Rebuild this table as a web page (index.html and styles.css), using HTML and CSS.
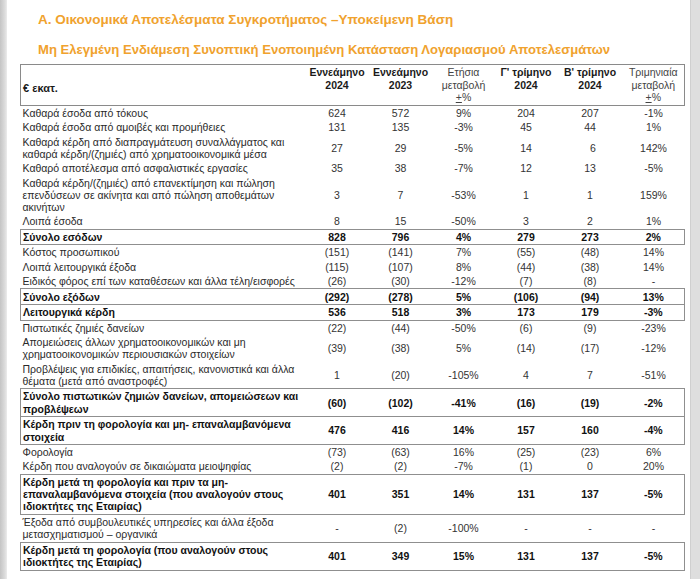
FILE: index.html
```html
<!DOCTYPE html>
<html lang="el">
<head>
<meta charset="utf-8">
<link rel="stylesheet" href="styles.css">
</head>
<body>
<div class="frame">
  <div class="edge-left"></div>
  <div class="page">
    <h1 class="title">Α. Οικονομικά Αποτελέσματα Συγκροτήματος –Υποκείμενη Βάση</h1>
    <h2 class="subtitle">Μη Ελεγμένη Ενδιάμεση Συνοπτική Ενοποιημένη Κατάσταση Λογαριασμού Αποτελεσμάτων</h2>
    <table class="fin">
      <colgroup>
        <col class="c-label"><col class="c-a"><col class="c-b"><col class="c-c"><col class="c-d"><col class="c-e"><col class="c-f">
      </colgroup>
      <thead>
        <tr class="head">
          <th class="lbl">€ εκατ.</th>
          <th>Εννεάμηνο<br>2024</th>
          <th>Εννεάμηνο<br>2023</th>
          <th class="reg">Ετήσια<br>μεταβολή<br><u>+</u>%</th>
          <th>Γ' τρίμηνο<br>2024</th>
          <th>Β' τρίμηνο<br>2024</th>
          <th class="reg">Τριμηνιαία<br>μεταβολή<br><u>+</u>%</th>
        </tr>
      </thead>
      <tbody>
        <tr><td>Καθαρά έσοδα από τόκους</td><td>624</td><td>572</td><td>9%</td><td>204</td><td>207</td><td>-1%</td></tr>
        <tr><td>Καθαρά έσοδα από αμοιβές και προμήθειες</td><td>131</td><td>135</td><td>-3%</td><td>45</td><td>44</td><td>1%</td></tr>
        <tr><td>Καθαρά κέρδη από διαπραγμάτευση συναλλάγματος και<br>καθαρά κέρδη/(ζημιές) από χρηματοοικονομικά μέσα</td><td>27</td><td>29</td><td>-5%</td><td>14</td><td>&nbsp;&nbsp;6</td><td>142%</td></tr>
        <tr><td>Καθαρό αποτέλεσμα από ασφαλιστικές εργασίες</td><td>35</td><td>38</td><td>-7%</td><td>12</td><td>13</td><td>-5%</td></tr>
        <tr><td>Καθαρά κέρδη/(ζημιές) από επανεκτίμηση και πώληση<br>επενδύσεων σε ακίνητα και από πώληση αποθεμάτων<br>ακινήτων</td><td>3</td><td>7</td><td>-53%</td><td>1</td><td>1</td><td>159%</td></tr>
        <tr><td>Λοιπά έσοδα</td><td>8</td><td>15</td><td>-50%</td><td>3</td><td>2</td><td>1%</td></tr>
        <tr class="box"><td>Σύνολο εσόδων</td><td>828</td><td>796</td><td>4%</td><td>279</td><td>273</td><td>2%</td></tr>
        <tr><td>Κόστος προσωπικού</td><td>(151)</td><td>(141)</td><td>7%</td><td>(55)</td><td>(48)</td><td>14%</td></tr>
        <tr><td>Λοιπά λειτουργικά έξοδα</td><td>(115)</td><td>(107)</td><td>8%</td><td>(44)</td><td>(38)</td><td>14%</td></tr>
        <tr><td>Ειδικός φόρος επί των καταθέσεων και άλλα τέλη/εισφορές</td><td>(26)</td><td>(30)</td><td>-12%</td><td>(7)</td><td>(8)</td><td>-</td></tr>
        <tr class="box"><td>Σύνολο εξόδων</td><td>(292)</td><td>(278)</td><td>5%</td><td>(106)</td><td>(94)</td><td>13%</td></tr>
        <tr class="box"><td>Λειτουργικά κέρδη</td><td>536</td><td>518</td><td>3%</td><td>173</td><td>179</td><td>-3%</td></tr>
        <tr><td>Πιστωτικές ζημιές δανείων</td><td>(22)</td><td>(44)</td><td>-50%</td><td>(6)</td><td>(9)</td><td>-23%</td></tr>
        <tr><td>Απομειώσεις άλλων χρηματοοικονομικών και μη<br>χρηματοοικονομικών περιουσιακών στοιχείων</td><td>(39)</td><td>(38)</td><td>5%</td><td>(14)</td><td>(17)</td><td>-12%</td></tr>
        <tr><td>Προβλέψεις για επιδικίες, απαιτήσεις, κανονιστικά και άλλα<br>θέματα (μετά από αναστροφές)</td><td>1</td><td>(20)</td><td>-105%</td><td>4</td><td>7</td><td>-51%</td></tr>
        <tr class="box"><td>Σύνολο πιστωτικών ζημιών δανείων, απομειώσεων και<br>προβλέψεων</td><td>(60)</td><td>(102)</td><td>-41%</td><td>(16)</td><td>(19)</td><td>-2%</td></tr>
        <tr class="box"><td>Κέρδη πριν τη φορολογία και μη- επαναλαμβανόμενα<br>στοιχεία</td><td>476</td><td>416</td><td>14%</td><td>157</td><td>160</td><td>-4%</td></tr>
        <tr><td>Φορολογία</td><td>(73)</td><td>(63)</td><td>16%</td><td>(25)</td><td>(23)</td><td>6%</td></tr>
        <tr><td>Κέρδη που αναλογούν σε δικαιώματα μειοψηφίας</td><td>(2)</td><td>(2)</td><td>-7%</td><td>(1)</td><td>0</td><td>20%</td></tr>
        <tr class="box"><td>Κέρδη μετά τη φορολογία και πριν τα μη-<br>επαναλαμβανόμενα στοιχεία (που αναλογούν στους<br>ιδιοκτήτες της Εταιρίας)</td><td>401</td><td>351</td><td>14%</td><td>131</td><td>137</td><td>-5%</td></tr>
        <tr><td>Έξοδα από συμβουλευτικές υπηρεσίες και άλλα έξοδα<br>μετασχηματισμού – οργανικά</td><td>-</td><td>(2)</td><td>-100%</td><td>-</td><td>-</td><td>-</td></tr>
        <tr class="box"><td>Κέρδη μετά τη φορολογία (που αναλογούν στους<br>ιδιοκτήτες της Εταιρίας)</td><td>401</td><td>349</td><td>15%</td><td>131</td><td>137</td><td>-5%</td></tr>
      </tbody>
    </table>
  </div>
  <div class="edge-right"></div>
</div>
</body>
</html>
```

FILE: styles.css
```css
html, body {
  margin: 0;
  padding: 0;
  background: #ffffff;
}
body {
  font-family: "Liberation Sans", Arial, sans-serif;
  color: #1a1a1a;
}
.frame {
  display: flex;
  width: 700px;
  height: 579px;
  overflow: hidden;
}
.edge-left {
  width: 7px;
  flex: none;
  background: linear-gradient(to right, #c4c4c4, #dcdcdc 70%, #ececec);
}
.edge-right {
  width: 9px;
  flex: none;
  background: #dedede;
  border-left: 1px solid #cfcfcf;
}
.page {
  flex: 1;
  padding: 11px 0 0 13px;
  min-width: 0;
}
.title {
  margin: 0 0 0 18px;
  font-size: 13.5px;
  line-height: 17px;
  font-weight: bold;
  color: #f0a22e;
}
.subtitle {
  margin: 14px 0 0 18px;
  font-size: 13.1px;
  line-height: 16px;
  font-weight: bold;
  color: #f0a22e;
}
.fin {
  margin-top: 6px;
  border-collapse: collapse;
  table-layout: fixed;
  width: 664px;
  font-size: 10.5px;
  line-height: 12.3px;
}
.c-label { width: 285px; }
.c-a { width: 63px; }
.c-b { width: 64px; }
.c-c { width: 62px; }
.c-d { width: 63px; }
.c-e { width: 65px; }
.c-f { width: 62px; }
.fin th {
  font-weight: bold;
  text-align: center;
  vertical-align: top;
  padding: 1px 0 1px;
  line-height: 12.7px;
}
.fin th.reg {
  font-weight: normal;
  color: #444;
}
.fin th.lbl {
  text-align: left;
  vertical-align: middle;
  padding: 6px 2px 0;
  font-size: 11px;
}
.head {
  border: 1px solid #8a8a8a;
}
.fin td {
  padding: 1px 0 1px;
  text-align: center;
  vertical-align: middle;
  color: #333;
  white-space: nowrap;
}
.fin td:first-child {
  text-align: left;
  padding-left: 2px;
  color: #2a2a2a;
}
.box {
  border: 1px solid #8f8f8f;
}
.box td {
  font-weight: bold;
  color: #111;
  padding-top: 1.2px;
  padding-bottom: 1.2px;
}
.box td:first-child {
  color: #111;
}
```
